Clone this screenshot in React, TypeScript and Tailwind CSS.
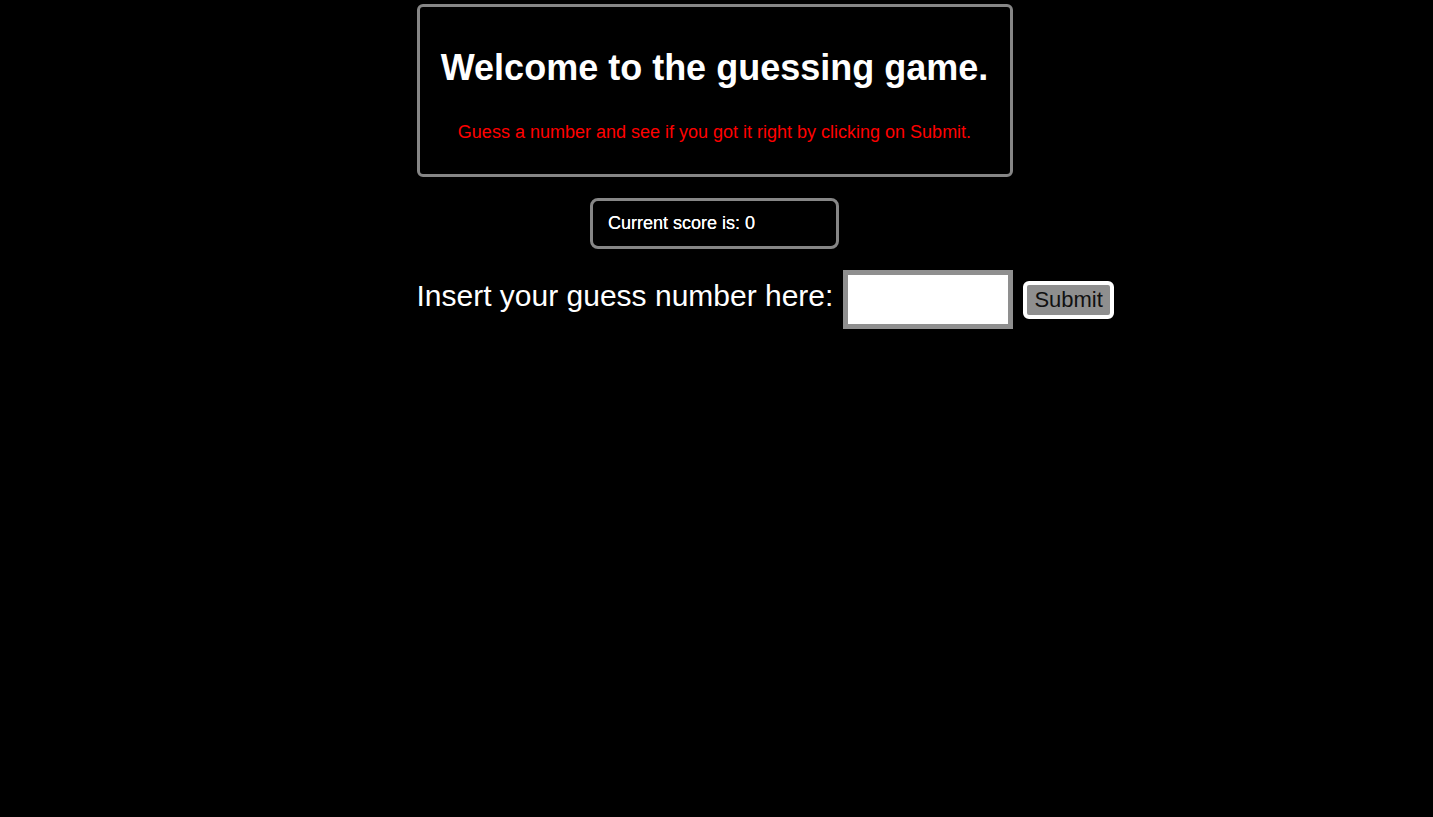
import React from "react";

export default function App() {
  return (
    <div className="min-h-[817px] w-full bg-black font-['Liberation_Sans',Arial,sans-serif]">
      <div className="mx-auto w-[596px] pt-[4px] translate-x-[-2px]">
        <div className="flex flex-col items-center rounded-[6px] border-[3px] border-[#868686] pt-[39px] pb-[32px]">
          <h1 className="text-[36px] font-bold leading-[44px] text-white">Welcome to the guessing game.</h1>
          <p className="mt-[32px] text-[18px] leading-[20px] text-[#ff0000]">
            Guess a number and see if you got it right by clicking on Submit.
          </p>
        </div>
        <div className="mt-[21px] flex justify-center">
          <div className="w-[249px] h-[51px] rounded-[8px] border-[3px] border-[#868686] pl-[15px] flex items-center text-[18px] text-white [text-shadow:0_0_0.3px_white]">
            Current score is: 0
          </div>
        </div>
        <div className="mt-[21px] flex items-center whitespace-nowrap">
          <label className="text-[30px] leading-[34px] text-white mb-[8px]">Insert your guess number here:</label>
          <input className="ml-[10px] h-[59px] w-[170px] border-[5px] border-[#8f8f8f] bg-white outline-none" />
          <button className="ml-[10px] h-[38px] rounded-[6px] border-[4px] border-white bg-[#8f8f8f] px-[7px] text-[22px] leading-[26px] text-[#111]">
            Submit
          </button>
        </div>
      </div>
    </div>
  );
}
